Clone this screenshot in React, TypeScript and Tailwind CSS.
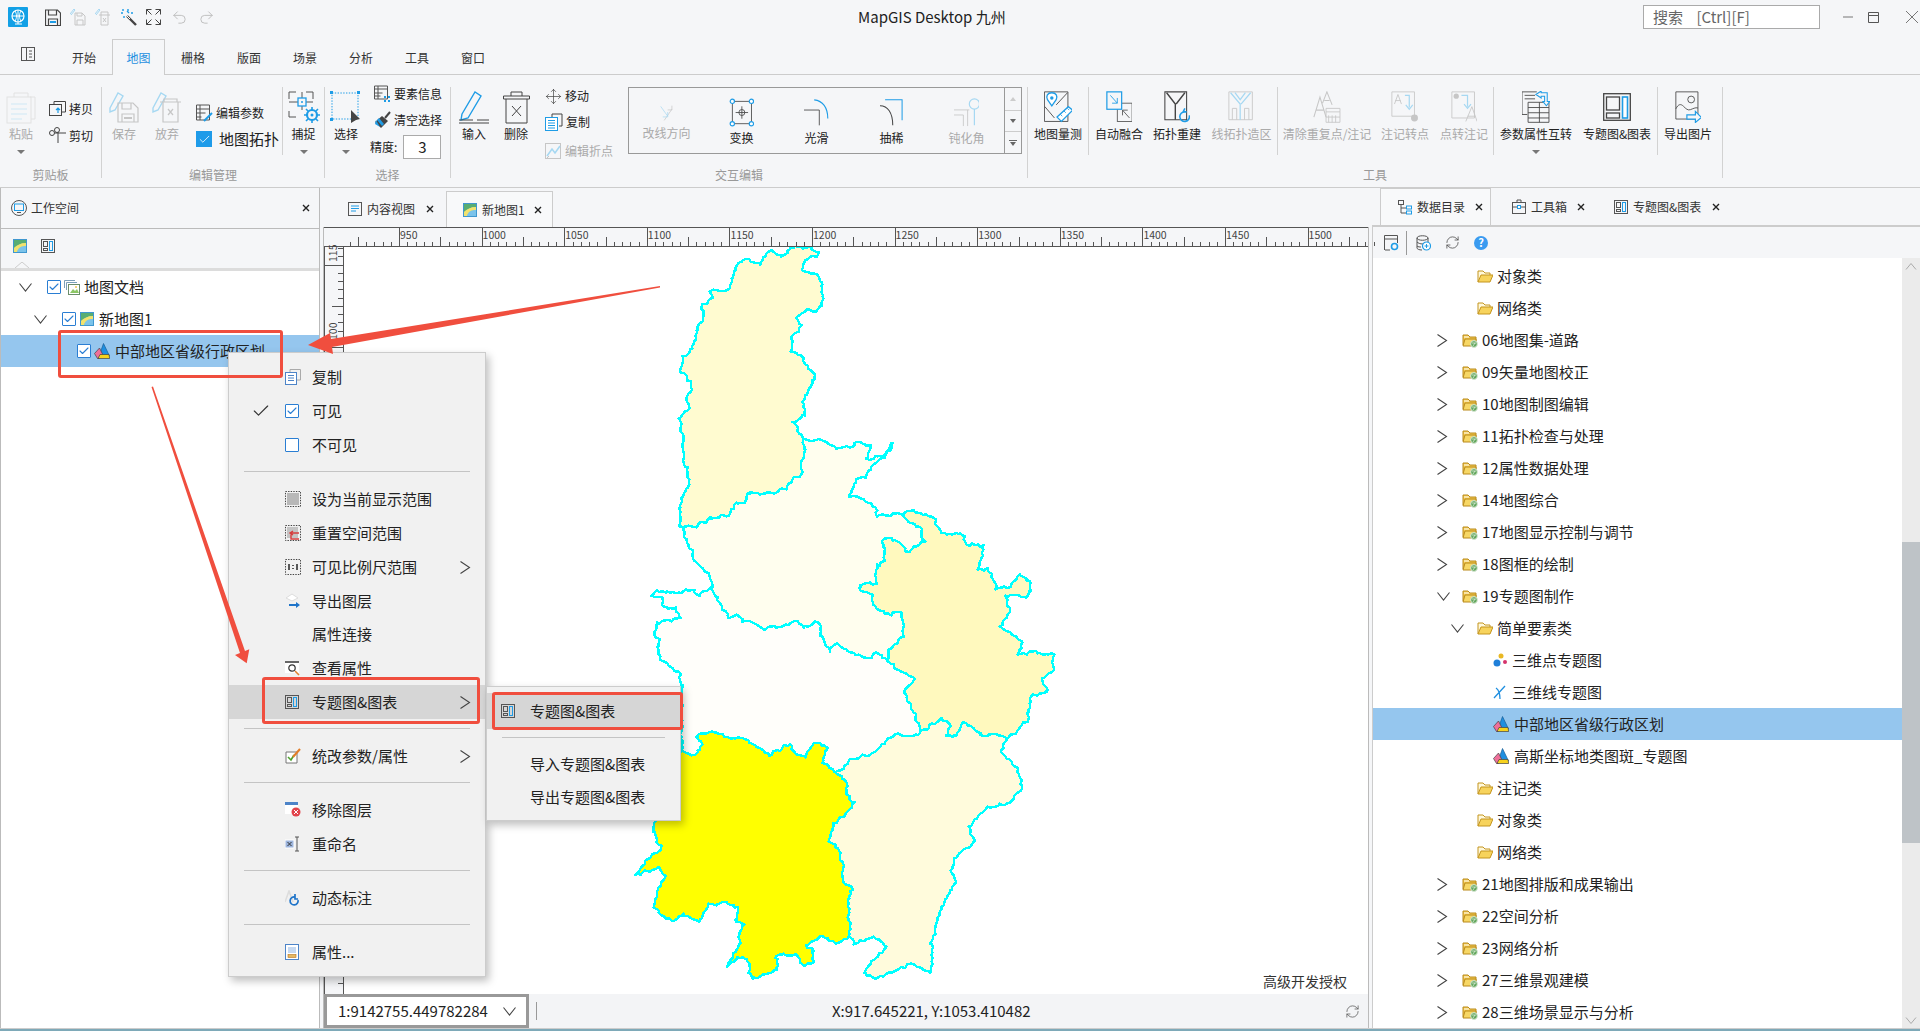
import type { ReactNode } from "react";
import { Check, Move, Redo2, RefreshCw, Undo2 } from "lucide-react";

const B = "#1e9ce6";
const G = "#555";
const D = "#c6c6c6";
const P = "#a6d8f2";

const Svg = ({ w, h, s = 1, children }: { w: number; h: number; s?: number; children: ReactNode }) => (
  <svg width={w * s} height={h * s} viewBox={`0 0 ${w} ${h}`} fill="none" className="shrink-0">
    {children}
  </svg>
);

// title bar
const Logo = () => (
  <Svg w={20} h={20}>
    <rect width={20} height={20} rx={1} fill="#12a0e6" />
    <circle cx={10} cy={9} r={6} stroke="#fff" strokeWidth={1.2} />
    <path d="M7 4c2 3 2 7 0 10M13 4c-2 3-2 7 0 10M4 9h12M10 3v14M7 17h7" stroke="#fff" />
  </Svg>
);
const SaveIc = ({ c = "#444", a = B }: { c?: string; a?: string }) => (
  <Svg w={16} h={17}>
    <path d="M.5 1h12l3 3v12.5H.5zM3.5 1v5h8V1M3.5 16v-6h9v6" stroke={c} strokeWidth={1.2} />
    <path d="M5 12h6v2H5z" fill={a} />
  </Svg>
);
const QSaveOff = () => (
  <Svg w={16} h={18}>
    <path d="M0 6l4-5 1 1-4 5" stroke={P} />
    <path d="M5 5h7l3 3v9H5zM7 5v3h5V5M7 17v-5h6v5" stroke={D} />
  </Svg>
);
const QTrashOff = () => (
  <Svg w={16} h={18}>
    <path d="M0 6l4-5 1 1-4 5" stroke={P} />
    <path d="M4 7h11M6 7V4h7v3M6 7v10h7V7M8 10l3 4M11 10l-3 4" stroke={D} />
  </Svg>
);
const Wand = () => (
  <Svg w={17} h={18}>
    <path d="M7 8l9 9" stroke="#444" strokeWidth={2.4} />
    <path d="M7 8l3 3" stroke="#fff" />
    <path d="M3 1v2M1 5h2M8 1v2M11 5h2M4 8v2M7 3l2 2" stroke={B} strokeWidth={1.4} />
  </Svg>
);
const Expand = () => (
  <Svg w={15} h={16}>
    <path d="M.5 5.5v-5h5M.5.5l5 5M14.5 5.5v-5h-5M14.5.5l-5 5M.5 10.5v5h5M.5 15.5l5-5M14.5 10.5v5h-5M14.5 15.5l-5-5" stroke="#444" />
  </Svg>
);
const SidePanel = () => (
  <Svg w={14} h={14}>
    <rect x={.5} y={.5} width={13} height={13} stroke={G} />
    <path d="M5.5 1v12M8 4h3M8 7h3M8 10h3" stroke={G} />
  </Svg>
);

// ribbon big icons
const Paste = () => (
  <Svg w={30} h={34}>
    <path d="M24 7h5v22h-4M8 7V3h14v4" stroke="#e2e2e2" />
    <rect x={1} y={7} width={24} height={26} stroke="#e2e2e2" />
    <path d="M5 14h16M5 19h16M5 24h16M5 29h11" stroke="#cfe8f5" />
  </Svg>
);
const CopyIc = () => (
  <Svg w={17} h={15}>
    <path d="M5 3V.5h11.5V11H13" stroke="#444" />
    <rect x={.5} y={3.5} width={12} height={11} stroke="#444" />
    <path d="M9 12V7M7 9l2-2 2 2" stroke={B} strokeWidth={1.2} />
  </Svg>
);
const CutIc = () => (
  <Svg w={17} h={17}>
    <circle cx={3} cy={6} r={2.5} stroke="#444" />
    <circle cx={8} cy={3} r={2.5} stroke="#444" />
    <path d="M5.5 6H17M9 5v11" stroke="#444" />
  </Svg>
);
const SaveBig = () => (
  <Svg w={30} h={32}>
    <path d="M1 17L9 2l5 3-8 14-5 2z" stroke={P} strokeWidth={1.4} />
    <path d="M9 12h15l5 5v14H9zM13 12v6h9v-6M13 31v-8h12v8" stroke={D} strokeWidth={1.2} />
    <path d="M15 26h8v2h-8z" fill={D} />
  </Svg>
);
const DropBig = () => (
  <Svg w={30} h={32}>
    <path d="M1 17L9 2l5 3-8 14-5 2z" stroke={P} strokeWidth={1.4} />
    <path d="M8 11h21M12 11V8h13v3M11 11v20h15V11M16 18l5 6M21 18l-5 6" stroke={D} strokeWidth={1.2} />
  </Svg>
);
const EditParam = () => (
  <Svg w={17} h={18}>
    <path d="M.5 1h13v15H.5zM.5 5h13M.5 9h9M.5 13h5M4 1v15" stroke={G} />
    <path d="M8 17l8-8" stroke={B} strokeWidth={2} />
  </Svg>
);
const Snap = () => (
  <Svg w={32} h={32}>
    <path d="M1 8V1h7M18 1h7v7M1 20v6h7M1 11h24M14 1v18" stroke={G} strokeWidth={1} />
    <rect x={10} y={7} width={8} height={8} stroke={B} strokeWidth={1.3} fill="#f5f6f8" />
    <circle cx={14} cy={11} r={1} fill={B} />
    <circle cx={24} cy={24} r={5} stroke={B} strokeWidth={2.2} />
    <circle cx={24} cy={24} r={1.5} fill={B} />
    <path d="M24 16v3M24 32v-3M16 24h3M32 24h-3M18 18l2 2M30 18l-2 2M18 30l2-2M30 30l-2-2" stroke={B} strokeWidth={1.6} />
  </Svg>
);
const Select = () => (
  <Svg w={32} h={32}>
    <rect x={2} y={2} width={26} height={26} stroke={B} strokeDasharray="1.4 1.4" />
    <rect x={0} y={0} width={3} height={3} fill={B} />
    <rect x={27} y={0} width={3} height={3} fill={B} />
    <rect x={0} y={27} width={3} height={3} fill={B} />
    <path d="M21 19l9 9-4 1-5 3z" fill="#444" />
  </Svg>
);
const FeatInfo = () => (
  <Svg w={17} h={18}>
    <path d="M.5 1h13v13H.5zM.5 4h13M.5 8h8M.5 11h6M4 1v13" stroke={G} />
    <path d="M10 11h2v2h-2zM14 11h2v2h-2zM10 15h2v2h-2zM14 15h2v2h-2z" fill={B} />
  </Svg>
);
const Broom = () => (
  <Svg w={17} h={18}>
    <path d="M16 1l-5 6" stroke="#444" strokeWidth={2} />
    <path d="M8 5l6 5-7 7-6-6z" fill="#444" />
    <path d="M2 9l4 7-5-3z" fill={B} />
    <path d="M5 7l5 6-2 2-5-6z" fill={B} />
  </Svg>
);
const InputIc = () => (
  <Svg w={31} h={34}>
    <path d="M3 24L16 2l6 4-13 22-7 2z" stroke={B} strokeWidth={1.4} />
    <path d="M0 30h14M18 30h12M0 33h30" stroke="#444" />
  </Svg>
);
const DeleteIc = () => (
  <Svg w={27} h={33}>
    <path d="M.5 5h26v3H.5zM8 5V1h11v4M3 8v24h21V8M9 15l9 10M18 15l-9 10" stroke="#444" />
  </Svg>
);
const DocIc = () => (
  <Svg w={18} h={18}>
    <path d="M7 4V1h10v12h-3" stroke="#444" />
    <rect x={.5} y={4.5} width={12} height={13} fill="#fff" stroke={B} />
    <path d="M3 7.5h7M3 10h7M3 12.5h7M3 15h7" stroke={B} />
  </Svg>
);
const EditVertex = () => (
  <Svg w={17} h={19}>
    <rect x={.5} y={1.5} width={15} height={15} stroke={D} />
    <path d="M2 14l5-7 3 4 5-7" stroke={P} strokeWidth={1.6} />
    <path d="M1 17l3-3" stroke={D} />
  </Svg>
);
const Reverse = () => (
  <Svg w={18} h={24} s={0.7}>
    <path d="M6 22L17 6M17 1v6h-6" stroke={D} />
    <path d="M1 2l10 14M11 10v7H4" stroke={P} />
  </Svg>
);
const Transform = () => (
  <Svg w={30} h={35} s={0.83}>
    <rect x={4} y={4} width={23} height={27} stroke="#444" />
    {[[4, 4], [27, 4], [4, 31], [27, 31]].map(([x, y]) => (
      <circle key={x * 100 + y} cx={x} cy={y} r={2.6} fill="#fff" stroke={B} strokeWidth={1.4} />
    ))}
    <circle cx={15.5} cy={17.5} r={3.6} stroke="#444" />
    <path d="M15.5 10v15M8 17.5h15" stroke="#444" />
  </Svg>
);
const Smooth = () => (
  <Svg w={30} h={32} s={0.85}>
    <path d="M0 13h18v18" stroke="#444" />
    <path d="M12 1c10 1 16 9 16 22" stroke={B} strokeWidth={1.3} />
  </Svg>
);
const Thin = () => (
  <Svg w={28} h={32} s={0.85}>
    <path d="M0 8c9 0 15 8 15 23" stroke="#444" strokeWidth={1.2} />
    <path d="M6 1h20v24" stroke={B} strokeWidth={1.2} />
  </Svg>
);
const Blunt = () => (
  <Svg w={30} h={33} s={0.85}>
    <path d="M0 14h18M16 14v19M0 20h11v13" stroke={D} />
    <circle cx={24} cy={7} r={6} stroke={P} strokeWidth={1.4} />
    <path d="M24 13v19" stroke={P} strokeWidth={1.4} />
  </Svg>
);
const Measure = () => (
  <Svg w={33} h={36} s={0.87}>
    <path d="M.5 1h27v34H.5z" stroke="#444" />
    <path d="M1 18l11 13M14 16L27 2" stroke="#444" />
    <path d="M9 2c-5 0-7 4-5 8l5 7 5-7c2-4 0-8-5-8z" fill="#fff" stroke={B} strokeWidth={1.5} />
    <circle cx={9} cy={8} r={2} fill={B} />
    <path d="M15 30l13-12 5 4-13 13z" fill="#fff" stroke={B} strokeWidth={1.5} />
    <path d="M19 27l2 2M23 23l2 2M27 20l2 2" stroke={B} />
  </Svg>
);
const Merge = () => (
  <Svg w={31} h={36} s={0.87}>
    <rect x={13} y={14} width={17} height={21} fill="#f5f6f8" stroke={G} />
    <rect x={1} y={1} width={17} height={20} fill="#f5f6f8" stroke={B} strokeWidth={1.4} />
    <path d="M5 5l8 9M13 8v6H7" stroke={B} />
    <path d="M27 31l-8-9M19 28v-6h6" stroke={G} />
  </Svg>
);
const Topo = ({ c = "#444", a = B }: { c?: string; a?: string }) => (
  <Svg w={31} h={36} s={0.87}>
    <path d="M1 1h25v32H1z" stroke={c} strokeWidth={1.2} />
    <path d="M3 2l10 13v18M24 2L14 15" stroke={c} strokeWidth={1.6} />
    <path d="M24 24a5.5 5.5 0 1 0 5 4M24 20l-2 4h4" stroke={a} strokeWidth={1.8} fill="none" />
  </Svg>
);
const TopoOff = () => (
  <Svg w={30} h={36} s={0.87}>
    <path d="M1 1h27v32H1z" stroke={D} />
    <path d="M3 2l11 13v18M26 2L15 15M8 2l6 8 6-8" stroke={P} strokeWidth={1.4} />
    <path d="M5 33V20h5v13M24 33V20h-5v13" stroke={D} />
  </Svg>
);
const Dedupe = () => (
  <Svg w={32} h={36} s={0.87}>
    <path d="M1 30L8 7l7 23M4 22h8M11 14L16 1l6 15M13 11h6" stroke={D} strokeWidth={1.2} />
    <path d="M15 20h16v4H15zM15 24v12h16V24M18 28v8M22 28v8M26 28v8M15 30h16" stroke={D} />
  </Svg>
);
const LabelPt = () => (
  <Svg w={32} h={36} s={0.87}>
    <path d="M1 1h26v28H1z" stroke={D} />
    <path d="M4 15L8 4l4 11M5 11h6" stroke={D} />
    <path d="M16 5h5v14M17 16l4 5 4-5" stroke={P} strokeWidth={1.4} />
    <circle cx={27} cy={31} r={4} fill={D} />
  </Svg>
);
const PtLabel = () => (
  <Svg w={31} h={36} s={0.87}>
    <path d="M1 1h26v30H1z" stroke={D} />
    <circle cx={6} cy={6} r={3} fill={D} />
    <path d="M12 5h7v13M15 15l4 5 4-5" stroke={P} strokeWidth={1.4} />
    <path d="M17 35l7-17 6 17M19 29h9" stroke={D} />
  </Svg>
);
const ParamSwap = () => (
  <Svg w={33} h={36} s={0.87}>
    <path d="M0 1h17M3 5h12M3 9h12" stroke="#444" />
    <path d="M0 1v26h6" stroke="#444" />
    <path d="M7 13h24v23H7zM7 19h24M7 25h24M7 31h24M20 13v23" stroke="#444" />
    <path d="M16 4l6-4v2h7v10h3l-4 5-4-5h2V6h-4v2z" fill="#f5f6f8" stroke={B} strokeWidth={1.2} />
  </Svg>
);
const Theme = () => (
  <Svg w={28} h={28}>
    <rect x={.7} y={.7} width={26.6} height={26.6} stroke="#444" strokeWidth={1.3} />
    <rect x={3.5} y={4} width={13} height={13} stroke="#444" strokeWidth={1.3} />
    <rect x={3.5} y={20} width={13} height={5} stroke="#444" strokeWidth={1.3} />
    <rect x={19.5} y={4} width={5} height={21} stroke={B} strokeWidth={1.6} fill="#fff" />
  </Svg>
);
const ExportImg = () => (
  <Svg w={31} h={37} s={0.85}>
    <path d="M1 1h26v32H1z" stroke="#444" />
    <circle cx={19} cy={10} r={4} stroke="#444" />
    <path d="M1 21c3-6 6-6 9-3s5 5 8 4 6-3 9-2" stroke="#444" />
    <path d="M14 28h10v-4l7 7-7 6v-4H14z" fill="#f5f6f8" stroke={B} strokeWidth={1.4} />
  </Svg>
);

// small tree / tab icons
const Cb = ({ on = true }: { on?: boolean }) => (
  <span className="flex h-[14px] w-[14px] shrink-0 items-center justify-center rounded-[1px] border border-[#2a7ed3] bg-white">
    {on && <Check size={12} strokeWidth={2.2} className="text-[#2a7ed3]" />}
  </span>
);
const MapThumb = () => (
  <Svg w={14} h={14}>
    <rect width={14} height={14} fill="#3f97cf" />
    <rect x={1} y={1} width={12} height={12} fill="#a6d6a0" />
    <path d="M1 1h12v3C8 4 4 6 1 9z" fill="#58ad72" />
    <path d="M1 9c3-3 7-5 12-5v3C8 7 5 9 4 13H1z" fill="#f2e26d" />
    <path d="M4 13c1-4 4-6 9-6v6z" fill="#7bc3ea" />
  </Svg>
);
const MapDoc = () => (
  <Svg w={16} h={15}>
    <path d="M.5 8V.5H11M2.5 10V2.5H13" stroke="#7a9fb8" />
    <rect x={4.5} y={4.5} width={11} height={10} fill="#fff" stroke="#6b8e6b" />
    <path d="M6 13l3-4 2 2 2-2 2 4z" fill="#8cc665" />
    <circle cx={12} cy={7} r={1} fill="#f2c94c" />
  </Svg>
);
const Layer = () => (
  <Svg w={16} h={16}>
    <path d="M9.5 .5L15.5 13H5z" fill="#1f8fe0" stroke="#1b5f96" strokeWidth={.7} />
    <path d="M.5 10.5L5.5 5l3 6-3 4.5H3.5z" fill="#ef6f9a" stroke="#444" strokeWidth={.7} />
    <path d="M6 11.5h9l.7 4H4z" fill="#f7d21d" stroke="#444" strokeWidth={.7} />
  </Svg>
);
const Folder = () => (
  <Svg w={16} h={15}>
    <path d="M1 2h5l2 2h6v8H1z" fill="#f3c84c" stroke="#b98a1d" />
    <path d="M2 4h5" stroke="#fff" />
    <path d="M3 6h11v7H1z" fill="#f7d765" stroke="#b98a1d" />
    <circle cx={12} cy={11} r={3.4} fill="#64a85e" stroke="#dbe8d8" />
    <path d="M10 10h4M11 13l2-3" stroke="#fff" strokeWidth={.6} />
  </Svg>
);
const OpenFolder = () => (
  <Svg w={16} h={14}>
    <path d="M1 13V2h5l2 2h5v2" fill="#fff8da" stroke="#c4951f" />
    <path d="M1 13l3-7h12l-3 7z" fill="#f7d35c" stroke="#c4951f" />
  </Svg>
);
const Dots = () => (
  <Svg w={14} h={14}>
    <circle cx={4} cy={10} r={3.5} fill="#1f7fd9" />
    <circle cx={8} cy={3} r={2.5} fill="#e9b824" />
    <circle cx={12} cy={9} r={2} fill="#d6336c" />
  </Svg>
);
const LineIc = () => (
  <Svg w={14} h={14}>
    <path d="M1 13L12 1M3 3c3 2 4 5 4 11" stroke="#1f8fe0" strokeWidth={1.3} />
  </Svg>
);
const Screen = () => (
  <Svg w={16} h={16}>
    <circle cx={8} cy={8} r={7.5} stroke={G} />
    <rect x={3.5} y={4} width={9} height={6.5} stroke={B} />
    <path d="M6 12.5h4" stroke={G} />
  </Svg>
);
const ThemeTool = () => (
  <Svg w={14} h={14}>
    <rect x={.5} y={.5} width={13} height={13} stroke={G} />
    <rect x={2.5} y={2.5} width={4} height={5} stroke={G} />
    <rect x={2.5} y={9.5} width={4} height={2} stroke={G} />
    <rect x={8.5} y={2.5} width={3} height={9} stroke={B} />
  </Svg>
);
const ContentDoc = () => (
  <Svg w={14} h={14}>
    <rect x={.5} y={.5} width={13} height={13} stroke={G} />
    <path d="M3 4h8M3 6.5h8M3 9h5" stroke={B} />
  </Svg>
);
const TreeIc = () => (
  <Svg w={14} h={15}>
    <rect x={.5} y={.5} width={5} height={4} stroke={G} />
    <path d="M3 5v8h5M3 8h5" stroke={G} />
    <rect x={8.5} y={6} width={5} height={3} stroke={B} />
    <rect x={8.5} y={11} width={5} height={3} stroke={B} />
  </Svg>
);
const Toolbox = () => (
  <Svg w={14} h={15}>
    <rect x={.5} y={3.5} width={13} height={11} stroke={G} />
    <path d="M5 3V1h4v2M1 8h12" stroke={G} />
    <rect x={5.5} y={6.5} width={3} height={3} fill="#fff" stroke={B} />
  </Svg>
);
const WinGear = () => (
  <Svg w={15} h={16}>
    <path d="M.5 15V.5h13V8M1 4h12M1 15h5" stroke={G} />
    <circle cx={10.5} cy={11.5} r={3} stroke={B} strokeWidth={1.6} />
  </Svg>
);
const DbPlus = () => (
  <Svg w={15} h={16}>
    <path d="M1 3c0-3 11-3 11 0v4M1 3v10c0 1 2 2 5 2M1 3c0 3 11 3 11 0M1 7c1 1 3 2 6 2M1 11c1 1 3 1 4 1" stroke={G} />
    <circle cx={10.5} cy={11} r={4} stroke={B} strokeWidth={1.2} fill="#fff" />
    <path d="M8.5 11h4M10.5 9v4" stroke={B} />
  </Svg>
);
const Help = () => (
  <span className="flex h-[14px] w-[14px] shrink-0 items-center justify-center rounded-full bg-[#3a9bf0] text-[11px] leading-none font-bold text-white">?</span>
);
const XSmall = () => (
  <Svg w={8} h={8}>
    <path d="M1 1l6 6M7 1L1 7" stroke="#222" strokeWidth={1.4} />
  </Svg>
);
const ChevDown = () => (
  <Svg w={13} h={9}>
    <path d="M.5 .5l6 7.5 6-7.5" stroke="#444" strokeWidth={1.1} />
  </Svg>
);
const ChevRight = () => (
  <Svg w={11} h={13}>
    <path d="M.5 .5l9 6-9 6" stroke="#444" strokeWidth={1.1} />
  </Svg>
);
const Tri = () => (
  <Svg w={8} h={4}>
    <path d="M0 0h8L4 4z" fill="#777" />
  </Svg>
);

// menu icons
const MDoc = () => (
  <Svg w={16} h={16}>
    <path d="M5 3V.5h10.5V11H12" stroke="#aaa" />
    <rect x={.5} y={3.5} width={11} height={12} fill="#fff" stroke="#4d84c8" />
    <path d="M3 6.5h6M3 9h6M3 11.5h6" stroke="#4d84c8" />
  </Svg>
);
const MRange = () => (
  <Svg w={16} h={16}>
    <rect x={.5} y={.5} width={15} height={15} stroke="#444" strokeDasharray="1.4 1.2" />
    <rect x={2} y={2} width={12} height={12} fill="#b8b8b8" />
  </Svg>
);
const MReset = () => (
  <Svg w={16} h={16}>
    <rect x={.5} y={.5} width={15} height={15} stroke="#444" strokeDasharray="1.4 1.2" />
    <rect x={2} y={2} width={11} height={11} fill="#c4c4c4" />
    <path d="M14 8H6v6h8M8 6L5 8l3 2" stroke="#d63c3c" strokeWidth={1.4} fill="none" />
  </Svg>
);
const MScale = () => (
  <Svg w={16} h={16}>
    <rect x={.5} y={.5} width={15} height={15} stroke="#444" strokeDasharray="1.4 1.2" />
    <path d="M4 5v6M12 5v6" stroke="#333" strokeWidth={1.6} />
    <path d="M8 6v1M8 9v1" stroke="#333" strokeWidth={1.6} />
  </Svg>
);
const MExport = () => (
  <Svg w={16} h={16}>
    <path d="M1 5l6-4 6 4-6 3z" fill="#fff" stroke="#ddd" />
    <path d="M4 11h7V9l4 3-4 3v-2H4z" fill="#1f74c9" />
  </Svg>
);
const MFind = () => (
  <Svg w={16} h={16}>
    <path d="M0 1h14v2H0z" fill="#666" />
    <path d="M0 3h14v10H0z" fill="#fff" />
    <circle cx={7} cy={8} r={3.2} stroke="#333" strokeWidth={1.2} />
    <path d="M10 11l4 4" stroke="#e2802c" strokeWidth={1.6} />
  </Svg>
);
const MEdit = () => (
  <Svg w={16} h={16}>
    <path d="M1 4h11v11H1z" fill="#fff" stroke="#777" />
    <path d="M3 9l3 3 3-5" stroke="#4da12d" strokeWidth={1.6} />
    <path d="M8 9l7-8" stroke="#e27d28" strokeWidth={2} />
  </Svg>
);
const MRemove = () => (
  <Svg w={16} h={16}>
    <path d="M0 0h13v12H0z" fill="#fff" />
    <path d="M0 0h13v3H0z" fill="#4d84c8" />
    <circle cx={11} cy={10} r={4.5} fill="#e2434b" />
    <path d="M9 8l4 4M13 8l-4 4" stroke="#fff" />
  </Svg>
);
const MRename = () => (
  <Svg w={16} h={16}>
    <rect x={0} y={4} width={9} height={8} fill="#9db5dd" stroke="#fff" />
    <path d="M2.5 6l4 4M6.5 6l-4 4" stroke="#333" />
    <path d="M10 1h4M10 15h4M12 1v14" stroke={G} />
  </Svg>
);
const MDynamic = () => (
  <Svg w={16} h={16}>
    <path d="M0 12L4 1l4 11" stroke="#ddd" strokeWidth={1.6} />
    <path d="M13 10a4 4 0 1 1-3-3M10 4v5h3" stroke="#1f74c9" strokeWidth={1.7} />
  </Svg>
);
const MProp = () => (
  <Svg w={14} h={16}>
    <rect x={.5} y={.5} width={13} height={15} fill="#fff" stroke="#4d84c8" />
    <path d="M3 4h8M3 6h8M3 8h8" stroke="#8cb2e2" />
    <rect x={3} y={10.5} width={8} height={3} fill="#e5b862" stroke="#b9741c" strokeWidth={.6} />
  </Svg>
);

// ribbon parts
const Big = ({
  w, label, icon, off, arrow,
}: { w: string; label: string; icon: ReactNode; off?: boolean; arrow?: boolean }) => (
  <div className={`${w} flex shrink-0 flex-col items-center pt-[4px]`}>
    <div className="flex h-[32px] items-center justify-center">{icon}</div>
    <div className={`text-[12px] leading-[22px] whitespace-nowrap ${off ? "text-[#aaa]" : "text-[#222]"}`}>{label}</div>
    {arrow && <div className="mt-[5px] flex"><Tri /></div>}
  </div>
);
const Small = ({ icon, label, off, h }: { icon: ReactNode; label: string; off?: boolean; h: string }) => (
  <div className={`${h} flex items-center gap-[3px] text-[12px] whitespace-nowrap ${off ? "text-[#aaa]" : "text-[#222]"}`}>
    {icon}
    <span>{label}</span>
  </div>
);
const VSep = () => <div className="h-[68px] w-px shrink-0 bg-[#d2d2d2]" />;
const Group = ({ w, label, children }: { w: string; label: string; children: ReactNode }) => (
  <div className={`${w} flex h-[91px] shrink-0 flex-col border-r border-[#d2d2d2]`}>
    <div className="flex h-[79px] shrink-0">{children}</div>
    <div className="shrink-0 text-center text-[12px] leading-[18px] text-[#999]">{label}</div>
  </div>
);

const GalleryItem = ({ icon, label, off, pt = "pt-[10px]", h = "h-[29px]" }: {
  icon: ReactNode; label: string; off?: boolean; pt?: string; h?: string;
}) => (
  <div className={`flex w-[75px] flex-col items-center ${pt} text-[12px] ${off ? "text-[#aaa]" : "text-[#222]"}`}>
    <div className={`flex ${h} items-center`}>{icon}</div>
    <span className="mt-[2px]">{label}</span>
  </div>
);

const Ribbon = () => (
  <div className="flex h-[113px] shrink-0 border-b border-[#ccc] pt-[12px]">
    <Group w="w-[102px]" label="剪贴板">
      <Big w="w-[42px]" label="粘贴" icon={<Paste />} off arrow />
      <div className="ml-[7px] pt-[8px]">
        <Small h="h-[27px]" icon={<CopyIc />} label="拷贝" />
        <Small h="h-[27px]" icon={<CutIc />} label="剪切" />
      </div>
    </Group>
    <Group w="w-[223px]" label="编辑管理">
      <Big w="w-[44px]" label="保存" icon={<SaveBig />} off />
      <Big w="w-[42px]" label="放弃" icon={<DropBig />} off />
      <div className="ml-[8px] w-[87px] pt-[13px]">
        <Small h="h-[26px]" icon={<EditParam />} label="编辑参数" />
        <div className="flex h-[26px] items-center gap-[7px] text-[15px] whitespace-nowrap text-[#222]">
          <span className="flex h-[16px] w-[16px] items-center justify-center bg-[#1e9be9]">
            <Check size={13} strokeWidth={1.5} className="text-white" />
          </span>
          <span>地图拓扑</span>
        </div>
      </div>
      <VSep />
      <Big w="w-[41px]" label="捕捉" icon={<Snap />} arrow />
    </Group>
    <Group w="w-[126px]" label="选择">
      <Big w="w-[42px]" label="选择" icon={<Select />} arrow />
      <div className="pl-[7px]">
        <Small h="h-[14px]" icon={<FeatInfo />} label="要素信息" />
        <div className="h-[12px]" />
        <Small h="h-[14px]" icon={<Broom />} label="清空选择" />
        <div className="mt-[8px] -ml-[4px] flex items-center gap-[6px] text-[12px] text-[#222]">
          <span>精度:</span>
          <span className="flex h-[24px] w-[38px] items-center justify-center border border-[#aaa] bg-white text-[15px]">3</span>
        </div>
      </div>
    </Group>
    <Group w="w-[577px]" label="交互编辑">
      <div className="w-[2px]" />
      <Big w="w-[42px]" label="输入" icon={<InputIc />} />
      <Big w="w-[42px]" label="删除" icon={<DeleteIc />} />
      <div className="ml-[8px] w-[83px]">
        <Small h="h-[26px] mt-[-4px]" icon={<Move size={17} strokeWidth={1} className="text-[#444]" />} label="移动" />
        <Small h="h-[26px]" icon={<DocIc />} label="复制" />
        <Small h="h-[28px] mt-[2px]" icon={<EditVertex />} label="编辑折点" off />
      </div>
      <div className="flex h-[67px] w-[394px] border border-[#999]">
        <div className="flex w-[375px]">
          <GalleryItem icon={<Reverse />} label="改线方向" off pt="pt-[17px]" h="h-[17px]" />
          <GalleryItem icon={<Transform />} label="变换" />
          <GalleryItem icon={<Smooth />} label="光滑" />
          <GalleryItem icon={<Thin />} label="抽稀" />
          <GalleryItem icon={<Blunt />} label="钝化角" off />
        </div>
        <div className="flex w-[18px] flex-col border-l border-[#999]">
          <div className="flex h-[23px] items-center justify-center border-b border-[#ccc]">
            <Svg w={6} h={4}><path d="M0 4h6L3 0z" fill="#ccc" /></Svg>
          </div>
          <div className="flex h-[21px] items-center justify-center border-b border-[#ccc]">
            <Svg w={6} h={4}><path d="M0 0h6L3 4z" fill="#666" /></Svg>
          </div>
          <div className="flex flex-1 flex-col items-center justify-center gap-[1px]">
            <div className="h-px w-[8px] bg-[#666]" />
            <Svg w={6} h={4}><path d="M0 0h6L3 4z" fill="#666" /></Svg>
          </div>
        </div>
      </div>
    </Group>
    <Group w="w-[695px]" label="工具">
      <Big w="w-[60px]" label="地图量测" icon={<Measure />} />
      <VSep />
      <div className="w-[1px]" />
      <Big w="w-[58px]" label="自动融合" icon={<Merge />} />
      <Big w="w-[58px]" label="拓扑重建" icon={<Topo />} />
      <Big w="w-[71px]" label="线拓扑造区" icon={<TopoOff />} off />
      <VSep />
      <div className="w-[1px]" />
      <Big w="w-[96px]" label="清除重复点/注记" icon={<Dedupe />} off />
      <Big w="w-[60px]" label="注记转点" icon={<LabelPt />} off />
      <Big w="w-[58px]" label="点转注记" icon={<PtLabel />} off />
      <VSep />
      <div className="w-[1px]" />
      <Big w="w-[82px]" label="参数属性互转" icon={<ParamSwap />} arrow />
      <Big w="w-[80px]" label="专题图&图表" icon={<Theme />} />
      <VSep />
      <Big w="w-[60px]" label="导出图片" icon={<ExportImg />} />
    </Group>
  </div>
);

// map
type Pt = number[];
const z8 = (p: Pt[]) => p.map(([x, y]) => [x, y + 1140]);
const rev = (p: Pt[]) => [...p].reverse();

const shanxiTop: Pt[] = [[178, 855], [185, 770], [205, 735], [205, 700], [190, 660], [190, 600], [177, 535], [205, 505], [202, 475], [218, 450], [200, 405], [180, 390], [188, 352], [218, 325], [232, 258], [246, 240], [252, 212], [242, 195], [262, 190], [278, 170], [272, 153], [328, 150], [335, 110], [350, 72], [378, 57], [402, 70], [422, 72], [442, 38], [458, 32], [478, 48], [500, 42], [510, 22], [572, 22], [575, 30], [600, 42], [555, 60], [545, 88], [595, 105], [608, 140], [605, 195], [585, 215], [560, 210], [532, 232], [542, 258], [515, 290], [515, 330], [545, 345], [552, 370], [588, 408], [570, 450], [552, 485], [552, 525], [522, 548], [535, 570]];
const sxBottom: Pt[] = [[552, 600], [552, 650], [545, 670], [545, 700], [505, 730], [495, 745], [460, 760], [378, 760], [378, 785], [350, 790], [325, 825], [270, 835], [225, 860], [190, 860]];
const henanN: Pt[] = [[600, 600], [650, 622], [695, 622], [712, 605], [750, 615], [742, 658], [790, 645], [818, 604], [818, 625], [790, 650], [745, 690], [735, 710], [712, 718], [690, 770], [730, 775], [765, 800], [772, 828]];
const anHen: Pt[] = [[850, 820], [860, 845], [900, 860], [912, 905], [860, 935], [845, 910], [805, 890], [790, 905], [795, 965], [770, 975], [768, 1030], [722, 1032], [722, 1055], [755, 1065], [765, 1105], [810, 1122], [845, 1115], [852, 1190], [805, 1230], [800, 1260]];
const hubHen: Pt[] = [[770, 1240], [740, 1258], [700, 1240], [650, 1210], [630, 1230], [610, 1205], [600, 1160], [595, 1142], [550, 1165], [530, 1142], [490, 1158], [430, 1165], [400, 1148], [370, 1145], [350, 1125], [330, 1130], [300, 1095], [275, 1042]];
const henanW: Pt[] = [[275, 1015], [250, 990], [225, 965], [215, 935], [200, 905], [190, 870]];
const hubJx: Pt[] = z8([[650, 460], [690, 420], [760, 400], [790, 370], [830, 340], [880, 350], [905, 335]]);
const anJx: Pt[] = z8([[905, 335], [965, 295], [995, 310], [980, 350], [1010, 345], [1030, 305], [1060, 320], [1085, 345], [1150, 345], [1160, 360]]);
const anHub: Pt[] = z8([[800, 120], [830, 150], [885, 175], [852, 215], [875, 265], [905, 335]]);
const anE: Pt[] = [...z8([[1225, 300], [1230, 230], [1285, 215], [1265, 180], [1300, 150], [1300, 105], [1240, 95], [1195, 105], [1205, 60], [1140, 20]]), [1170, 1110], [1155, 1065], [1225, 1070], [1230, 1025], [1195, 1005], [1170, 1040], [1130, 1045], [1105, 985], [1075, 990], [1090, 915], [1040, 915], [1030, 885], [965, 878], [940, 835], [880, 810]];
const huN: Pt[] = z8([[185, 390], [225, 405], [245, 375], [232, 347], [270, 335], [330, 352], [380, 358], [450, 405], [510, 370], [525, 405], [555, 410], [590, 365], [620, 380], [610, 430], [650, 460]]);
const huJx: Pt[] = z8([[650, 460], [685, 490], [680, 520], [700, 550], [680, 580], [640, 610], [625, 660], [655, 690], [670, 745], [668, 785], [700, 800], [685, 850], [690, 950]]);
const huW: Pt[] = z8([[650, 970], [600, 950], [555, 980], [580, 990], [580, 1030], [550, 1035], [530, 1005], [470, 1005], [470, 1050], [395, 1078], [382, 1015], [345, 1015], [322, 1040], [360, 970], [360, 935], [378, 912], [345, 900], [355, 860], [315, 848], [270, 855], [235, 905], [190, 880], [160, 905], [130, 895], [105, 860], [110, 810], [135, 770], [115, 745], [45, 765], [80, 720], [125, 685], [105, 650], [100, 610]]);
const jxS: Pt[] = z8([[1145, 400], [1190, 440], [1208, 505], [1170, 548], [1100, 565], [1045, 620], [1065, 665], [1000, 715], [995, 755], [1010, 790], [985, 820], [960, 870], [945, 940], [930, 970], [940, 990], [930, 1055], [880, 1030], [770, 1075], [730, 1055], [795, 985], [790, 965], [765, 950], [705, 970]]);
const hubW: Pt[] = [[235, 1065], [222, 1048], [160, 1060], [110, 1050], [92, 1065], [130, 1075], [130, 1100], [170, 1105], [180, 1135], [110, 1148], [100, 1180], ...z8([[115, 60], [118, 115], [180, 165], [185, 200]])];

// wobble the traced outline so it reads like a real boundary
const outline = (pts: Pt[]) => {
  const out: string[] = [];
  pts.forEach(([x, y], i) => {
    const [nx, ny] = pts[(i + 1) % pts.length];
    const n = Math.max(1, Math.round(Math.hypot(nx - x, ny - y) / 8));
    for (let k = 0; k < n; k++) {
      const a = x + ((nx - x) * k) / n;
      const b = y + ((ny - y) * k) / n;
      const dx = 3 * Math.sin(a * 0.23 + b * 0.11) + 2 * Math.sin(b * 0.41 - a * 0.17);
      const dy = 3 * Math.sin(b * 0.19 - a * 0.13) + 2 * Math.sin(a * 0.37 + b * 0.21);
      out.push(`${(620 + (a + dx) / 3).toFixed(1)},${(240 + (b + dy) / 3).toFixed(1)}`);
    }
  });
  return out.join(" ");
};

const provinces: { fill: string; pts: Pt[] }[] = [
  { fill: "#fffbd0", pts: [...shanxiTop, ...sxBottom] },
  { fill: "#fffeee", pts: [[552, 600], ...henanN, ...anHen, ...hubHen, ...henanW, ...rev(sxBottom)] },
  { fill: "#fffefa", pts: [[275, 1042], ...hubW, ...huN, ...hubJx, ...rev(anHub), ...hubHen] },
  { fill: "#fff9be", pts: [...anHen, ...anHub, ...anJx, ...anE] },
  { fill: "#fffbdc", pts: [...hubJx, ...anJx, ...jxS, ...rev(huJx)] },
  { fill: "#ffff00", pts: [...huN, ...huJx, ...huW] },
];

const MapShapes = () => (
  <svg viewBox="344 247 1024 747" className="block h-full w-full" shapeRendering="crispEdges">
    {provinces.map((p) => (
      <polygon key={p.fill} points={outline(p.pts)} fill={p.fill} stroke="#00ffff" strokeWidth={2.4} strokeLinejoin="round" />
    ))}
  </svg>
);

const rulerFont = { fontFamily: "Noto Sans CJK SC, sans-serif" };

const TopRuler = () => (
  <svg viewBox="344 227 1024 20" className="block h-[20px] w-full overflow-visible" shapeRendering="crispEdges">
    <path d="M344 227.5H1368M344 246.5H1368" stroke={G} />
    {Array.from({ length: 125 }, (_, i) => {
      const x = Math.round(349.5 + i * 8.26) + 0.5;
      const major = (i - 6) % 10 === 0;
      const mid = (i - 1) % 10 === 0;
      return <path key={i} d={`M${x} ${major ? 227 : mid ? 237 : 242}V246`} stroke={G} />;
    })}
    {Array.from({ length: 12 }, (_, i) => (
      <text key={i} x={400 + i * 82.6} y={239} fontSize={10.5} fill="#444" style={rulerFont}>
        {950 + i * 50}
      </text>
    ))}
  </svg>
);

const LeftRuler = () => (
  <svg viewBox="324 247 20 747" className="block h-full w-[20px] overflow-visible" shapeRendering="crispEdges">
    <path d="M324.5 247V994M343.5 247V994" stroke={G} />
    {Array.from({ length: 90 }, (_, i) => {
      const y = Math.round(248 + i * 8.26) + 0.5;
      return <path key={i} d={`M${i % 10 === 2 ? 324 : i % 5 === 2 ? 332 : 338} ${y}H344`} stroke={G} />;
    })}
    <text transform="translate(337 262) rotate(-90)" fontSize={10.5} fill="#444" style={rulerFont}>115</text>
    <text transform="translate(337 340) rotate(-90)" fontSize={10.5} fill="#444" style={rulerFont}>100</text>
  </svg>
);

// panels
const Tree = ({ level, open, icon, label, on }: {
  level: 1 | 2 | 3; open?: boolean; icon: ReactNode; label: string; on?: boolean;
}) => (
  <div className={`flex h-[32px] items-center text-[15px] whitespace-nowrap text-[#222] ${on ? "bg-[#95c6ee]" : ""} ${level === 1 ? "pl-[64px]" : level === 2 ? "pl-[78px]" : "pl-[120px]"}`}>
    {level === 1 && <span className="w-[25px]">{open ? <ChevDown /> : <ChevRight />}</span>}
    {level === 2 && <span className="w-[26px]">{open && <ChevDown />}</span>}
    {icon}
    <span className={level === 3 ? "ml-[5px]" : "ml-[4px]"}>{label}</span>
  </div>
);

const Lv1 = ({ label, open }: { label: string; open?: boolean }) => <Tree level={1} open={open} icon={<Folder />} label={label} />;
const Lv2 = ({ label, open }: { label: string; open?: boolean }) => <Tree level={2} open={open} icon={<OpenFolder />} label={label} />;

const RightPanel = () => (
  <div className="flex w-[550px] shrink-0 flex-col">
    <div className="flex h-[37px] shrink-0 items-stretch pl-[10px] text-[12px] text-[#333]">
      <div className="flex w-[111px] items-center border-x border-t border-[#ccc] bg-[#f8f9fa] pl-[17px]">
        <TreeIc /><span className="ml-[5px]">数据目录</span><span className="ml-[10px]"><XSmall /></span>
      </div>
      <div className="flex items-center pl-[21px]">
        <Toolbox /><span className="ml-[5px]">工具箱</span><span className="ml-[10px]"><XSmall /></span>
      </div>
      <div className="flex items-center pl-[29px]">
        <ThemeTool /><span className="ml-[5px]">专题图&图表</span><span className="ml-[11px]"><XSmall /></span>
      </div>
    </div>
    <div className="ml-[2px] flex min-h-0 flex-1 flex-col overflow-hidden border-t-2 border-l border-[#ccc]">
      <div className="flex h-[31px] shrink-0 items-center gap-[14px] pl-[11px]">
        <WinGear />
        <div className="-ml-[7px] h-[24px] w-px bg-[#999]" />
        <div className="-ml-[5px] flex items-center gap-[14px]"><DbPlus /><RefreshCw size={15} strokeWidth={1.2} className="text-[#444]" /><Help /></div>
      </div>
      <div className="flex min-h-0 flex-1">
        <div className="min-w-0 flex-1 overflow-hidden bg-white pt-[2px]">
          <Lv2 label="对象类" />
          <Lv2 label="网络类" />
          <Lv1 label="06地图集-道路" />
          <Lv1 label="09矢量地图校正" />
          <Lv1 label="10地图制图编辑" />
          <Lv1 label="11拓扑检查与处理" />
          <Lv1 label="12属性数据处理" />
          <Lv1 label="14地图综合" />
          <Lv1 label="17地图显示控制与调节" />
          <Lv1 label="18图框的绘制" />
          <Lv1 label="19专题图制作" open />
          <Lv2 label="简单要素类" open />
          <Tree level={3} icon={<Dots />} label="三维点专题图" />
          <Tree level={3} icon={<LineIc />} label="三维线专题图" />
          <Tree level={3} icon={<Layer />} label="中部地区省级行政区划" on />
          <Tree level={3} icon={<Layer />} label="高斯坐标地类图斑_专题图" />
          <Lv2 label="注记类" />
          <Lv2 label="对象类" />
          <Lv2 label="网络类" />
          <Lv1 label="21地图排版和成果输出" />
          <Lv1 label="22空间分析" />
          <Lv1 label="23网络分析" />
          <Lv1 label="27三维景观建模" />
          <Lv1 label="28三维场景显示与分析" />
        </div>
        <div className="flex w-[18px] shrink-0 flex-col bg-[#ebebeb]">
          <div className="flex h-[16px] items-center justify-center">
            <Svg w={12} h={7}><path d="M1 6.5l5-6 5 6" stroke="#aaa" /></Svg>
          </div>
          <div className="mt-[268px] h-[301px] bg-[#bec3c7]" />
          <div className="mt-auto flex h-[16px] items-center justify-center">
            <Svg w={12} h={7}><path d="M1 .5l5 6 5-6" stroke="#aaa" /></Svg>
          </div>
        </div>
      </div>
    </div>
  </div>
);

const LeftPanel = () => (
  <div className="flex w-[320px] shrink-0 flex-col border-x border-[#bbb]">
    <div className="flex h-[41px] shrink-0 items-center border-b border-[#bbb] pr-[9px] pl-[10px] text-[12px] text-[#333]">
      <Screen />
      <span className="ml-[4px]">工作空间</span>
      <span className="ml-auto"><XSmall /></span>
    </div>
    <div className="relative flex h-[42px] shrink-0 items-center gap-[14px] border-b-[3px] border-[#dcdcdc] pb-[5px] pl-[12px]">
      <MapThumb />
      <ThemeTool />
      <div className="absolute bottom-0 left-[14px] flex">
        <Svg w={14} h={6}><path d="M0 6l7-6 7 6" stroke="#ccc" /></Svg>
      </div>
    </div>
    <div className="flex-1 bg-white text-[15px] whitespace-nowrap text-[#222]">
      <div className="flex h-[32px] items-center pl-[18px]">
        <ChevDown /><span className="w-[15px]" /><Cb /><span className="ml-[3px]"><MapDoc /></span><span className="ml-[4px]">地图文档</span>
      </div>
      <div className="flex h-[32px] items-center pl-[33px]">
        <ChevDown /><span className="w-[15px]" /><Cb /><span className="ml-[4px]"><MapThumb /></span><span className="ml-[5px]">新地图1</span>
      </div>
      <div className="flex h-[32px] items-center bg-[#95c6ee] pl-[76px]">
        <Cb /><span className="ml-[3px]"><Layer /></span><span className="ml-[5px]">中部地区省级行政区划</span>
      </div>
    </div>
  </div>
);

const CenterPanel = () => (
  <div className="flex min-w-0 flex-1 flex-col">
    <div className="flex h-[39px] shrink-0 items-end pl-[25px] text-[12px] text-[#333]">
      <div className="flex h-[36px] w-[101px] items-center pl-[3px]">
        <ContentDoc /><span className="ml-[5px]">内容视图</span><span className="ml-[11px]"><XSmall /></span>
      </div>
      <div className="flex h-[36px] w-[107px] items-center border-x border-t border-[#ccc] bg-[#f8f9fa] pl-[16px]">
        <MapThumb /><span className="ml-[5px]">新地图1</span><span className="ml-[9px]"><XSmall /></span>
      </div>
    </div>
    <div className="ml-[3px] flex min-h-0 w-[1046px] flex-1 flex-col border-x border-[#bbb]">
      <div className="flex h-[20px] shrink-0">
        <div className="h-[20px] w-[20px] shrink-0 border-y border-[#555] bg-[#f5f6f8]" />
        <TopRuler />
      </div>
      <div className="flex min-h-0 flex-1">
        <LeftRuler />
        <div className="relative min-w-0 flex-1 bg-white">
          <MapShapes />
          <span className="absolute right-[21px] bottom-[2px] text-[14px] text-[#333]">高级开发授权</span>
        </div>
      </div>
      <div className="flex h-[34px] shrink-0 items-center bg-[#f3f4f6]">
        <div className="flex h-[34px] w-[205px] items-center border-[3px] border-[#999] bg-white pr-[10px] pl-[11px] text-[15px] text-[#222]">
          <span>1:9142755.449782284</span>
          <span className="ml-auto"><ChevDown /></span>
        </div>
        <div className="ml-[7px] h-[18px] w-px bg-[#999]" />
        <div className="flex-1 pl-[295px] text-[15px] text-[#222]">X:917.645221, Y:1053.410482</div>
        <RefreshCw size={15} strokeWidth={1.2} className="mr-[8px] text-[#555]" />
      </div>
    </div>
  </div>
);

const MenuItem = ({ icon, label, check, sub, on, h = "h-[34px]" }: {
  icon?: ReactNode; label: string; check?: boolean; sub?: boolean; on?: boolean; h?: string;
}) => (
  <div className={`flex ${h} items-center pl-[22px] ${on ? "bg-[#d6d6d6]" : ""}`}>
    <span className="w-[34px]">{check && <Check size={20} strokeWidth={1.4} className="text-[#333]" />}</span>
    <span className="flex w-[27px] items-center">{icon}</span>
    <span>{label}</span>
    {sub && <span className="mr-[14px] ml-auto"><ChevRight /></span>}
  </div>
);
const MenuSep = () => (
  <div className="h-[20px] px-[15px] pt-[9px]">
    <div className="h-px bg-[#c4c4c4]" />
  </div>
);

const ContextMenu = () => (
  <div className="absolute top-[352px] left-[228px] w-[258px] border border-[#ccc] bg-[#f1f1f1] py-[7px] text-[15px] text-[#222] shadow-[3px_4px_8px_rgba(0,0,0,0.25)]">
    <MenuItem icon={<MDoc />} label="复制" />
    <MenuItem icon={<Cb />} label="可见" check />
    <MenuItem icon={<Cb on={false} />} label="不可见" />
    <MenuSep />
    <MenuItem icon={<MRange />} label="设为当前显示范围" />
    <MenuItem icon={<MReset />} label="重置空间范围" />
    <MenuItem icon={<MScale />} label="可见比例尺范围" sub />
    <MenuItem icon={<MExport />} label="导出图层" />
    <MenuItem label="属性连接" h="h-[33px]" />
    <MenuItem icon={<MFind />} label="查看属性" />
    <MenuItem icon={<ThemeTool />} label="专题图&图表" sub on />
    <MenuSep />
    <MenuItem icon={<MEdit />} label="统改参数/属性" sub />
    <MenuSep />
    <MenuItem icon={<MRemove />} label="移除图层" />
    <MenuItem icon={<MRename />} label="重命名" />
    <MenuSep />
    <MenuItem icon={<MDynamic />} label="动态标注" />
    <MenuSep />
    <MenuItem icon={<MProp />} label="属性..." />
  </div>
);

const SubMenu = () => (
  <div className="absolute top-[686px] left-[486px] w-[195px] border border-[#ccc] bg-[#f1f1f1] py-[6px] text-[15px] text-[#222] shadow-[3px_4px_8px_rgba(0,0,0,0.25)]">
    <div className="flex h-[36px] items-center bg-[#d6d6d6] pl-[14px]">
      <ThemeTool /><span className="ml-[15px]">专题图&图表</span>
    </div>
    <div className="h-[18px] px-[15px] pt-[8px]">
      <div className="h-px bg-[#c4c4c4]" />
    </div>
    <div className="flex h-[34px] items-center pl-[43px]">导入专题图&图表</div>
    <div className="flex h-[33px] items-center pl-[43px]">导出专题图&图表</div>
  </div>
);

const Callouts = () => (
  <svg viewBox="0 0 1920 1031" className="pointer-events-none absolute inset-0 h-[1031px] w-[1920px]">
    <path d="M660 286L331 339l-1-6-22 12 25 9-1-7L660 287.5z" fill="#f04e3e" />
    <path d="M151.5 387L153 386.5 245 651l4.3-1.7-2.6 14-11.7-8.3 5-2z" fill="#f04e3e" />
  </svg>
);

export default function App() {
  return (
    <div className="relative flex h-[1031px] w-[1920px] flex-col overflow-hidden bg-[#f5f6f8] font-['Noto_Sans_CJK_SC','Noto_Sans',sans-serif] text-[#222]">
      <div className="flex h-[40px] shrink-0 items-center pl-[8px]">
        <div className="-mt-[6px]"><Logo /></div>
        <div className="-mt-[6px] ml-[17px] flex items-center gap-[9px]">
          <SaveIc />
          <QSaveOff />
          <QTrashOff />
          <Wand />
          <Expand />
          <Undo2 size={17} strokeWidth={1.3} className="ml-[1px] text-[#bbb]" />
          <Redo2 size={17} strokeWidth={1.3} className="ml-[1px] text-[#bbb]" />
        </div>
        <div className="-mt-[6px] ml-[643px] w-[147px] text-[15px] whitespace-nowrap">MapGIS Desktop 九州</div>
        <div className="-mt-[6px] ml-[638px] flex h-[24px] w-[177px] items-center border border-[#aaa] bg-white pl-[9px] text-[15px] whitespace-pre text-[#666]">搜索    [Ctrl][F]</div>
        <div className="-mt-[6px] ml-[23px] flex items-center gap-[15px]">
          <Svg w={10} h={2}><path d="M0 1h10" stroke="#777" /></Svg>
          <Svg w={11} h={11}><path d="M.5 3.5h10v7H.5z" stroke={G} /><path d="M.5 .5h10v3H.5z" stroke={G} /></Svg>
          <span className="ml-[11px] flex"><Svg w={14} h={14}><path d="M1 1l12 12M13 1L1 13" stroke="#777" /></Svg></span>
        </div>
      </div>
      <div className="flex h-[35px] shrink-0 items-end border-b border-[#ccc] text-[12px] text-[#333]">
        <div className="self-center pb-[6px] pl-[21px]"><SidePanel /></div>
        <div className="mb-[-1px] flex items-stretch pl-[21px]">
          <div className="flex w-[56px] items-center justify-center pt-[1px]">开始</div>
          <div className="flex h-[36px] w-[53px] items-center justify-center border-x border-t border-[#ccc] bg-[#f5f6f8] pt-[1px] text-[#1e8fe0]">地图</div>
          {["栅格", "版面", "场景", "分析", "工具", "窗口"].map((t) => (
            <div key={t} className="flex w-[56px] items-center justify-center pt-[1px]">{t}</div>
          ))}
        </div>
      </div>
      <Ribbon />
      <div className="flex min-h-0 flex-1">
        <LeftPanel />
        <CenterPanel />
        <RightPanel />
      </div>
      <div className="h-[3px] shrink-0 border-t border-[#ccc] bg-[#7ea9b8]" />
      <ContextMenu />
      <SubMenu />
      <div className="absolute top-[330px] left-[58px] h-[48px] w-[225px] rounded-[3px] border-[3px] border-[#f04e3e]" />
      <div className="absolute top-[677px] left-[262px] h-[47px] w-[218px] rounded-[3px] border-[3px] border-[#f04e3e]" />
      <div className="absolute top-[692px] left-[492px] h-[38px] w-[191px] rounded-[3px] border-[3px] border-[#f04e3e]" />
      <Callouts />
    </div>
  );
}
